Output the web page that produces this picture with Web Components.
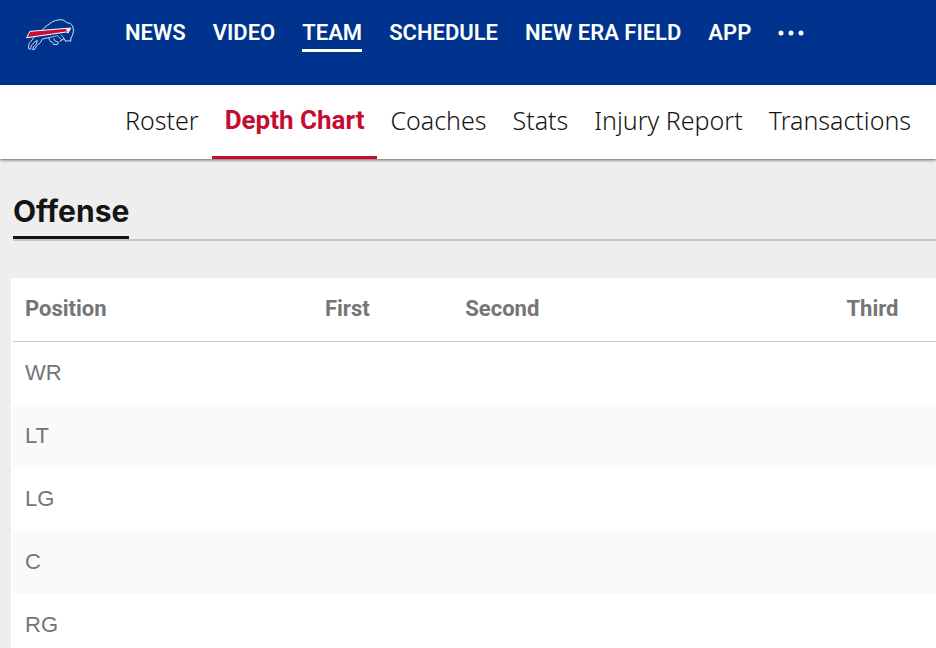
<!DOCTYPE html>
<html lang="en">
<head>
<meta charset="UTF-8">
<meta name="viewport" content="width=device-width, initial-scale=1">
<title>Bills Depth Chart</title>
<style>
    body { margin: 0; background: #eee; color: #151515; font-family: Roboto, "Open Sans", sans-serif; }
    main { padding: 32px 0 0 11px; }
</style>
</head>
<body>
<team-header>
    <team-logo slot="logo"></team-logo>
    <nav-link href="#news">NEWS</nav-link>
    <nav-link href="#video">VIDEO</nav-link>
    <nav-link href="#team" active>TEAM</nav-link>
    <nav-link href="#schedule">SCHEDULE</nav-link>
    <nav-link href="#field">NEW ERA FIELD</nav-link>
    <nav-link href="#app">APP</nav-link>
</team-header>
<sub-nav>
    <sub-link href="#roster">Roster</sub-link>
    <sub-link href="#depth-chart" active>Depth Chart</sub-link>
    <sub-link href="#coaches">Coaches</sub-link>
    <sub-link href="#stats">Stats</sub-link>
    <sub-link href="#injury-report">Injury Report</sub-link>
    <sub-link href="#transactions">Transactions</sub-link>
</sub-nav>
<main>
    <section-title>Offense</section-title>
    <depth-table positions="WR,LT,LG,C,RG"></depth-table>
</main>

<script>
// LOGO
class TeamLogo extends HTMLElement {
    constructor() { super(); this.attachShadow({ mode: 'open' }); }

    connectedCallback() {
        this.shadowRoot.innerHTML = `
        <style>
            :host { display: block; width: 62px; height: 50px; }
            svg { display: block; width: 100%; height: 100%; }
        </style>
        <svg viewBox="0 0 186 150" role="img" aria-label="Buffalo Bills" fill="none" stroke="#fff" stroke-width="3" stroke-linejoin="round" stroke-linecap="round">
            <path d="M31 64 L152 54 L144 69 L139 66 L21 83 Z" fill="#c60c30"/>
            <path d="M66 61 C75 51 80 47 89 41 C99 32 113 29 126 29 C133 32 139 36 142 39 C153 38 159 47 160 58 C161 68 158 76 153 84 L152 94 L146 92 L137 94 L132 86 L126 90 L120 94" stroke-width="2.6"/>
            <path d="M43 81 L36 90 L27 101 L25 115 L32 118 L33 108 L43 97 L52 91 L49 102 L40 111 L38 119 L44 118 L50 107 L61 98 L67 87 L86 83 L91 94 L98 97 L101 104 L113 103 L115 97 L105 93 L101 86" stroke-width="2.4"/>
            <path d="M86 83 L112 77 L124 88 M124 75 L133 87" stroke-width="2"/>
            <path d="M139 58 L150 56 L145 68 Z" fill="#fff" stroke-width="1"/>
        </svg>`;
    }
}
customElements.define('team-logo', TeamLogo);

// TOP NAVIGATION
class NavLink extends HTMLElement {
    constructor() { super(); this.attachShadow({ mode: 'open' }); }

    connectedCallback() {
        const active = this.hasAttribute('active');
        this.shadowRoot.innerHTML = `
        <style>
            :host { display: block; }
            a { display: block; border-bottom: 3px solid ${active ? '#fff' : 'transparent'}; color: #fff; font-size: 22px; font-weight: 600; line-height: 33px; text-decoration: none; white-space: nowrap; }
        </style>
        <a href="${this.getAttribute('href')}" ${active ? 'aria-current="true"' : ''}><slot></slot></a>`;
    }
}
customElements.define('nav-link', NavLink);

class TeamHeader extends HTMLElement {
    constructor() { super(); this.attachShadow({ mode: 'open' }); }

    connectedCallback() {
        this.shadowRoot.innerHTML = `
        <style>
            :host { display: block; background: #00338d; }
            header { display: flex; align-items: flex-start; gap: 43px; padding: 10px 20px 25px; }
            nav { display: flex; align-items: flex-start; gap: 27px; padding-top: 6px; }
            button { display: flex; align-items: center; height: 34px; padding: 0; border: 0; background: none; cursor: pointer; }
            svg { display: block; fill: #fff; }
        </style>
        <header>
            <slot name="logo"></slot>
            <nav aria-label="Main">
                <slot></slot>
                <button type="button" aria-label="More">
                    <svg width="26" height="6" viewBox="0 0 26 6">
                        <circle cx="3" cy="3" r="2.5"/><circle cx="13" cy="3" r="2.5"/><circle cx="23" cy="3" r="2.5"/>
                    </svg>
                </button>
            </nav>
        </header>`;
    }
}
customElements.define('team-header', TeamHeader);

// SECTION NAVIGATION
class SubLink extends HTMLElement {
    constructor() { super(); this.attachShadow({ mode: 'open' }); }

    connectedCallback() {
        const active = this.hasAttribute('active');
        this.shadowRoot.innerHTML = `
        <style>
            :host { display: block; }
            a { display: block; padding: 18px 13px; border-bottom: 3px solid transparent; color: #151515; font: 300 25px/35px "Noto Sans", sans-serif; text-decoration: none; white-space: nowrap; }
            a.active { border-color: #c60c30; color: #c60c30; font: 700 26px/35px Roboto, sans-serif; }
        </style>
        <a class="${active ? 'active' : ''}" href="${this.getAttribute('href')}" ${active ? 'aria-current="page"' : ''}><slot></slot></a>`;
    }
}
customElements.define('sub-link', SubLink);

class SubNav extends HTMLElement {
    constructor() { super(); this.attachShadow({ mode: 'open' }); }

    connectedCallback() {
        this.shadowRoot.innerHTML = `
        <style>
            :host { display: block; position: relative; background: #fff; box-shadow: 0 1px 3px rgba(0,0,0,0.6); }
            nav { display: flex; padding-left: 112px; }
        </style>
        <nav aria-label="Team"><slot></slot></nav>`;
    }
}
customElements.define('sub-nav', SubNav);

// SECTION TITLE
class SectionTitle extends HTMLElement {
    constructor() { super(); this.attachShadow({ mode: 'open' }); }

    connectedCallback() {
        this.shadowRoot.innerHTML = `
        <style>
            :host { display: block; margin: 0 0 37px 2px; border-bottom: 2px solid #c8c8c8; }
            h2 { width: fit-content; margin: 0; padding-bottom: 5px; border-bottom: 3px solid #151515; font: 700 30px/40px Inter, sans-serif; }
        </style>
        <h2><slot></slot></h2>`;
    }
}
customElements.define('section-title', SectionTitle);

// DEPTH CHART TABLE
class DepthTable extends HTMLElement {
    constructor() { super(); this.attachShadow({ mode: 'open' }); }

    connectedCallback() {
        const rows = this.getAttribute('positions').split(',').map(p => `
            <tr><td>${p}</td><td></td><td></td><td></td></tr>`).join('');

        this.shadowRoot.innerHTML = `
        <style>
            :host { display: block; padding-left: 2px; background: #fff; color: #757575; }
            table { width: 100%; border-collapse: separate; border-spacing: 0; table-layout: fixed; }
            th, td { height: 63px; box-sizing: border-box; padding: 0 12px 2px; text-align: left; }
            th { height: 64px; border-bottom: 1px solid #c8c8c8; font-size: 22px; font-weight: 700; }
            td { font: 22px "Liberation Sans", Arial, sans-serif; }
            tbody tr:nth-child(even) { background: #fafafa; }
            .position { width: 32.5%; }
            .first { width: 15.2%; }
            .second { width: 41.3%; }
        </style>
        <table>
            <thead>
                <tr>
                    <th class="position" scope="col">Position</th>
                    <th class="first" scope="col">First</th>
                    <th class="second" scope="col">Second</th>
                    <th scope="col">Third</th>
                </tr>
            </thead>
            <tbody>${rows}</tbody>
        </table>`;
    }
}
customElements.define('depth-table', DepthTable);
</script>
</body>
</html>
